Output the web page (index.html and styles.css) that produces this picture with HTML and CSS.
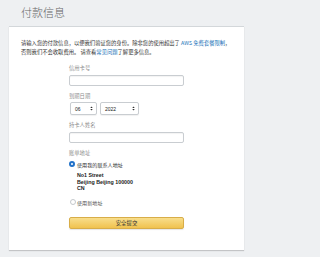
FILE: index.html
```html
<!DOCTYPE html>
<html lang="zh-CN">
<head>
<meta charset="utf-8">
<title>付款信息</title>
<link rel="stylesheet" href="styles.css">
</head>
<body>
<header class="page-head">
  <h1 class="title">付款信息</h1>
</header>
<main class="card">
  <p class="intro"><span>请输入您的付款信息，以便我们验证您的身份。除非您的使用超出了 </span><a class="link" href="#">AWS 免费套餐限制</a><span>，</span><br><span>否则我们不会收取费用。 请查看</span><a class="link" href="#">常见问题</a><span>了解更多信息。</span></p>
  <form class="form">
    <label class="label lbl-first">信用卡号</label>
    <div class="input"></div>

    <label class="label">到期日期</label>
    <div class="selects">
      <div class="select sel-month"><span>06</span><svg class="arrows" width="3" height="5" viewBox="0 0 6 10"><path d="M0.5 4 L3 0.8 L5.5 4 Z M0.5 6 L3 9.2 L5.5 6 Z" fill="#333"/></svg></div>
      <div class="select sel-year"><span>2022</span><svg class="arrows" width="3" height="5" viewBox="0 0 6 10"><path d="M0.5 4 L3 0.8 L5.5 4 Z M0.5 6 L3 9.2 L5.5 6 Z" fill="#333"/></svg></div>
    </div>

    <label class="label">持卡人姓名</label>
    <div class="input"></div>

    <label class="label">账单地址</label>
    <div class="radio-row">
      <span class="radio checked"></span><span class="radio-text">使用我的联系人地址</span>
    </div>
    <div class="address">
      <div>No1 Street</div>
      <div>Beijing Beijing 100000</div>
      <div>CN</div>
    </div>
    <div class="radio-row row-new">
      <span class="radio"></span><span class="radio-text">使用新地址</span>
    </div>

    <div class="button">安全提交</div>
  </form>
</main>
</body>
</html>
```
FILE: styles.css
```css
html, body {
  margin: 0;
  padding: 0;
}
body {
  background: #eef0f2;
  font-family: "Liberation Sans", "Noto Sans CJK SC", sans-serif;
  color: #333;
  width: 253px;
  height: 257px;
  overflow: hidden;
}
.page-head {
  height: 26px;
  box-sizing: border-box;
  padding: 6px 0 0 21px;
}
.title {
  margin: 0;
  font-family: "Noto Sans CJK SC", sans-serif;
  font-weight: 300;
  font-size: 11px;
  line-height: 13px;
  color: #666;
}
.card {
  display: block;
  margin: 0 9px;
  background: #fff;
  border-top: 1px solid #d3d7da;
  box-shadow: 0 1px 1px rgba(0,0,0,0.18);
  padding: 12px 9px 21px 12px;
  height: 224px;
  box-sizing: border-box;
}
.intro {
  margin: 0;
  font-family: "Noto Sans CJK SC", sans-serif;
  font-size: 5.3px;
  line-height: 9px;
  color: #333;
  white-space: nowrap;
}
.link {
  color: #1a73b8;
  text-decoration: none;
}
.form {
  display: flex;
  flex-direction: column;
  margin-left: 48px;
  width: 115px;
}
.label {
  display: block;
  font-family: "Noto Sans CJK SC", sans-serif;
  font-size: 5.3px;
  line-height: 8px;
  color: #8a8a8a;
  margin-top: 6px;
  margin-bottom: 3px;
}
.lbl-first {
  margin-top: 7px;
}
.input {
  height: 11px;
  box-sizing: border-box;
  border: 1px solid #c9cdd1;
  border-radius: 2px;
  background: #fff;
  box-shadow: inset 0 1px 1px rgba(0,0,0,0.05);
}
.selects {
  display: flex;
  gap: 3px;
  margin-top: -1px;
}
.select {
  display: flex;
  align-items: center;
  justify-content: space-between;
  height: 13px;
  box-sizing: border-box;
  border: 1px solid #c9cdd1;
  border-radius: 2px;
  padding: 0 3px 0 4px;
  font-size: 5px;
  color: #222;
  background: #fff;
  box-shadow: 0 1px 1px rgba(0,0,0,0.06);
}
.sel-month { width: 27px; margin-left: 1px; }
.sel-year { width: 39px; }
.arrows { display: block; }
.radio-row {
  display: flex;
  align-items: center;
  gap: 2px;
  height: 8px;
}
.radio {
  width: 6px;
  height: 6px;
  box-sizing: border-box;
  border-radius: 50%;
  border: 1px solid #c4c8cc;
  background: #fff;
}
.radio.checked {
  border: 2px solid #2272c8;
  background: #fff;
}
.row-new .radio {
  margin-left: 1px;
  margin-right: -1px;
}
.radio-text {
  font-family: "Noto Sans CJK SC", sans-serif;
  font-size: 5.1px;
  color: #333;
}
.address {
  margin: 4px 0 0 8px;
  font-size: 5.3px;
  line-height: 6.5px;
  font-weight: bold;
  color: #222;
}
.row-new {
  margin-top: 6.5px;
}
.row-new .radio-text {
  color: #555;
}
.button {
  margin-top: 11px;
  height: 12px;
  box-sizing: border-box;
  border: 1px solid #d8ad48;
  border-radius: 2px;
  background: linear-gradient(#f8de8c, #f0c24e);
  display: flex;
  align-items: center;
  justify-content: center;
  font-family: "Noto Sans CJK SC", sans-serif;
  font-size: 5.4px;
  color: #333;
  box-shadow: 0 1px 1px rgba(0,0,0,0.1);
}
```
